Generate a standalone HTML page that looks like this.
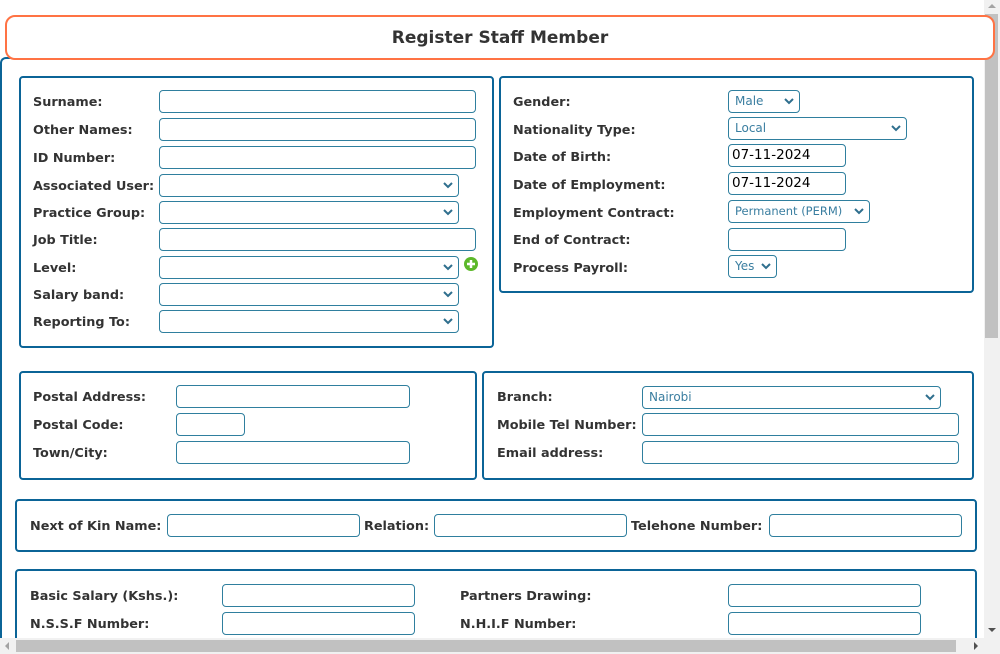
<!DOCTYPE html>
<html style="overflow:hidden;width:1000px;height:654px"><head><meta charset="utf-8"><style>
*{box-sizing:border-box;margin:0;padding:0}
html,body{width:1000px;height:654px;overflow:hidden}
body{background:#fff;position:relative;font-family:"DejaVu Sans","Liberation Sans",sans-serif}
.a{position:absolute}
.fs{position:absolute;border:2px solid #0b6497;border-radius:4px}
.l{position:absolute;font-size:12.8px;font-weight:bold;color:#333;line-height:16px;white-space:nowrap}
.i{position:absolute;border:1px solid #2f7f9e;border-radius:4px;height:23px;background:#fff;font-size:12px;color:#3a7ea0;padding-left:6px;line-height:21px;white-space:nowrap;overflow:hidden;font-family:"DejaVu Sans",sans-serif}
.d{color:#000;padding-left:3px;font-size:13.5px}
.s svg{position:absolute;right:5px;top:7px}
</style></head><body>
<div class="a" style="left:984px;top:0;width:16px;height:638px;background:#f1f1f1"></div>
<div class="a" style="left:985px;top:14px;width:13px;height:324px;background:#c1c1c1"></div>
<div class="a" style="left:988px;top:4px;width:0;height:0;border-left:4px solid transparent;border-right:4px solid transparent;border-bottom:4px solid #a3a3a3"></div>
<div class="a" style="left:0;top:57px;width:984px;height:590px;border-left:2px solid #0b6497;border-top:2px solid #0b6497;border-radius:6px 0 0 0"></div>
<div class="a" style="left:5px;top:15px;width:990px;height:45px;border:2px solid #ff7344;border-radius:10px;background:#fff;text-align:center;font-size:17px;font-weight:bold;color:#333;line-height:43px;z-index:2">Register Staff Member</div>

<div class="fs" style="left:19px;top:76px;width:475px;height:272px"></div>
<div class="l" style="left:33px;top:95px">Surname:</div>
<div class="l" style="left:33px;top:123px">Other Names:</div>
<div class="l" style="left:33px;top:151px">ID Number:</div>
<div class="l" style="left:33px;top:179px">Associated User:</div>
<div class="l" style="left:33px;top:206px">Practice Group:</div>
<div class="l" style="left:33px;top:233px">Job Title:</div>
<div class="l" style="left:33px;top:261px">Level:</div>
<div class="l" style="left:33px;top:288px">Salary band:</div>
<div class="l" style="left:33px;top:315px">Reporting To:</div>
<div class="i" style="left:159px;top:90px;width:317px"></div>
<div class="i" style="left:159px;top:118px;width:317px"></div>
<div class="i" style="left:159px;top:146px;width:317px"></div>
<div class="i s" style="left:159px;top:174px;width:300px"><svg width="10" height="7"><path d="M1 1l4 4 4-4" fill="none" stroke="#2f6f8e" stroke-width="2"/></svg></div>
<div class="i s" style="left:159px;top:201px;width:300px"><svg width="10" height="7"><path d="M1 1l4 4 4-4" fill="none" stroke="#2f6f8e" stroke-width="2"/></svg></div>
<div class="i" style="left:159px;top:228px;width:317px"></div>
<div class="i s" style="left:159px;top:256px;width:300px"><svg width="10" height="7"><path d="M1 1l4 4 4-4" fill="none" stroke="#2f6f8e" stroke-width="2"/></svg></div>
<svg class="a" style="left:463px;top:256px" width="16" height="16"><circle cx="8" cy="8" r="7" fill="#5cb82a"/><path d="M8 4v8M4 8h8" stroke="#fff" stroke-width="2.5"/></svg>
<div class="i s" style="left:159px;top:283px;width:300px"><svg width="10" height="7"><path d="M1 1l4 4 4-4" fill="none" stroke="#2f6f8e" stroke-width="2"/></svg></div>
<div class="i s" style="left:159px;top:310px;width:300px"><svg width="10" height="7"><path d="M1 1l4 4 4-4" fill="none" stroke="#2f6f8e" stroke-width="2"/></svg></div>

<div class="fs" style="left:499px;top:76px;width:475px;height:217px"></div>
<div class="l" style="left:513px;top:95px">Gender:</div>
<div class="l" style="left:513px;top:123px">Nationality Type:</div>
<div class="l" style="left:513px;top:150px">Date of Birth:</div>
<div class="l" style="left:513px;top:178px">Date of Employment:</div>
<div class="l" style="left:513px;top:206px">Employment Contract:</div>
<div class="l" style="left:513px;top:233px">End of Contract:</div>
<div class="l" style="left:513px;top:261px">Process Payroll:</div>
<div class="i s" style="left:728px;top:90px;width:72px">Male<svg width="10" height="7"><path d="M1 1l4 4 4-4" fill="none" stroke="#2f6f8e" stroke-width="2"/></svg></div>
<div class="i s" style="left:728px;top:117px;width:179px">Local<svg width="10" height="7"><path d="M1 1l4 4 4-4" fill="none" stroke="#2f6f8e" stroke-width="2"/></svg></div>
<div class="i d" style="left:728px;top:144px;width:118px">07-11-2024</div>
<div class="i d" style="left:728px;top:172px;width:118px">07-11-2024</div>
<div class="i s" style="left:728px;top:200px;width:142px;font-size:11.5px">Permanent (PERM)<svg width="10" height="7" style="background:#fff"><path d="M1 1l4 4 4-4" fill="none" stroke="#2f6f8e" stroke-width="2"/></svg></div>
<div class="i" style="left:728px;top:228px;width:118px"></div>
<div class="i s" style="left:728px;top:255px;width:49px">Yes<svg width="10" height="7"><path d="M1 1l4 4 4-4" fill="none" stroke="#2f6f8e" stroke-width="2"/></svg></div>

<div class="fs" style="left:19px;top:371px;width:458px;height:109px"></div>
<div class="l" style="left:33px;top:390px">Postal Address:</div>
<div class="l" style="left:33px;top:418px">Postal Code:</div>
<div class="l" style="left:33px;top:446px">Town/City:</div>
<div class="i" style="left:176px;top:385px;width:234px"></div>
<div class="i" style="left:176px;top:413px;width:69px"></div>
<div class="i" style="left:176px;top:441px;width:234px"></div>

<div class="fs" style="left:482px;top:371px;width:492px;height:109px"></div>
<div class="l" style="left:497px;top:390px">Branch:</div>
<div class="l" style="left:497px;top:418px">Mobile Tel Number:</div>
<div class="l" style="left:497px;top:446px">Email address:</div>
<div class="i s" style="left:642px;top:386px;width:299px">Nairobi<svg width="10" height="7"><path d="M1 1l4 4 4-4" fill="none" stroke="#2f6f8e" stroke-width="2"/></svg></div>
<div class="i" style="left:642px;top:413px;width:317px"></div>
<div class="i" style="left:642px;top:441px;width:317px"></div>

<div class="fs" style="left:15px;top:499px;width:962px;height:53px"></div>
<div class="l" style="left:30px;top:519px">Next of Kin Name:</div>
<div class="i" style="left:167px;top:514px;width:193px"></div>
<div class="l" style="left:364px;top:519px">Relation:</div>
<div class="i" style="left:434px;top:514px;width:193px"></div>
<div class="l" style="left:631px;top:519px">Telehone Number:</div>
<div class="i" style="left:769px;top:514px;width:193px"></div>

<div class="fs" style="left:15px;top:569px;width:962px;height:80px"></div>
<div class="l" style="left:30px;top:589px">Basic Salary (Kshs.):</div>
<div class="l" style="left:30px;top:617px">N.S.S.F Number:</div>
<div class="i" style="left:222px;top:584px;width:193px"></div>
<div class="i" style="left:222px;top:612px;width:193px"></div>
<div class="l" style="left:460px;top:589px">Partners Drawing:</div>
<div class="l" style="left:460px;top:617px">N.H.I.F Number:</div>
<div class="i" style="left:728px;top:584px;width:193px"></div>
<div class="i" style="left:728px;top:612px;width:193px"></div>

<div class="a" style="left:0;top:638px;width:1000px;height:16px;background:#f1f1f1;z-index:3"></div>
<div class="a" style="left:16px;top:640px;width:940px;height:12px;background:#c1c1c1;z-index:3"></div>
<div class="a" style="left:988px;top:628px;width:0;height:0;border-left:4px solid transparent;border-right:4px solid transparent;border-top:4px solid #505050;z-index:4"></div>
<div class="a" style="left:5px;top:642px;width:0;height:0;border-top:4px solid transparent;border-bottom:4px solid transparent;border-right:4px solid #a3a3a3;z-index:4"></div>
<div class="a" style="left:974px;top:642px;width:0;height:0;border-top:4px solid transparent;border-bottom:4px solid transparent;border-left:4px solid #505050;z-index:4"></div>
</body></html>
